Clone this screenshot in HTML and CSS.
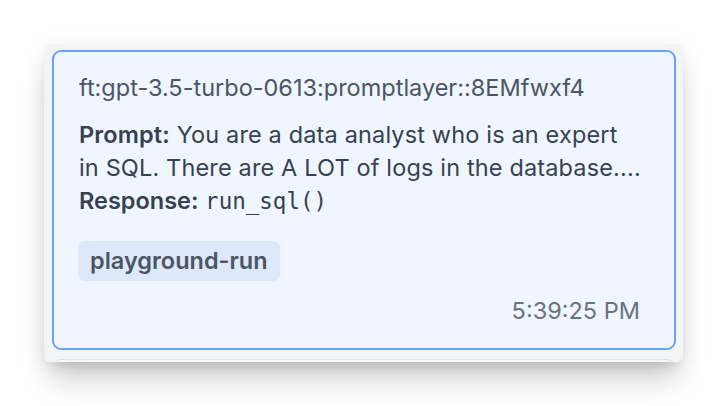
FILE: index.html
```html
<!DOCTYPE html>
<html>
<head>
<meta charset="utf-8">
<link rel="stylesheet" href="styles.css">
</head>
<body>
<div class="panel">
  <div class="card">
    <div class="model">ft:gpt-3.5-turbo-0613:promptlayer::8EMfwxf4</div>
    <div class="prompt"><b>Prompt:</b> You are a data analyst who is an expert<br>in SQL. There are A LOT of logs in the database....</div>
    <div class="response"><b>Response:</b> <code>run_sql()</code></div>
    <div class="tags"><span class="tag">playground-run</span></div>
    <div class="time">5:39:25 PM</div>
  </div>
  <div class="card next"></div>
</div>
</body>
</html>
```

FILE: styles.css
```css
html, body {
  margin: 0;
  padding: 0;
  background: #ffffff;
  font-family: Inter, "Noto Sans", sans-serif;
}
body {
  width: 728px;
  height: 406px;
  overflow: hidden;
  position: relative;
}
.panel {
  position: absolute;
  left: 44px;
  top: 44px;
  width: 639px;
  height: 318px;
  box-sizing: border-box;
  padding: 6px 7px 0 8px;
  background: #f3f4f6;
  border-radius: 6px;
  overflow: hidden;
  box-shadow: 0 22px 28px -6px rgba(0,0,0,0.2), 0 8px 12px -6px rgba(0,0,0,0.12), 0 0 22px rgba(0,0,0,0.06);
  display: flex;
  flex-direction: column;
  gap: 9px;
}
.card {
  flex: none;
  box-sizing: border-box;
  border: 2px solid #6aa3f5;
  border-radius: 9px;
  background: #eff6ff;
  padding: 19px 26px 21px 25px;
  display: flex;
  flex-direction: column;
  color: #374151;
  font-size: 23.5px;
  line-height: 33px;
}
.card.next {
  height: 40px;
  border: 1px solid #e0e2e6;
  background: #f6f7f9;
}
.model {
  color: #4b5563;
}
.prompt {
  margin-top: 14px;
  white-space: nowrap;
  letter-spacing: 0.15px;
  color: #374151;
}
.prompt b, .response b {
  font-weight: 600;
}
code {
  font-family: "DejaVu Sans Mono", "Liberation Mono", monospace;
  font-size: 22.5px;
  color: #374151;
}
.tags {
  margin-top: 23px;
  display: flex;
}
.tag {
  margin-left: -1px;
  background: #dde8fb;
  color: #4b5563;
  font-weight: 600;
  border-radius: 7px;
  padding: 0 12px;
  height: 40px;
  line-height: 40px;
}
.time {
  align-self: flex-end;
  color: #6b7280;
  margin-top: 13px;
  margin-right: 8px;
}
```
